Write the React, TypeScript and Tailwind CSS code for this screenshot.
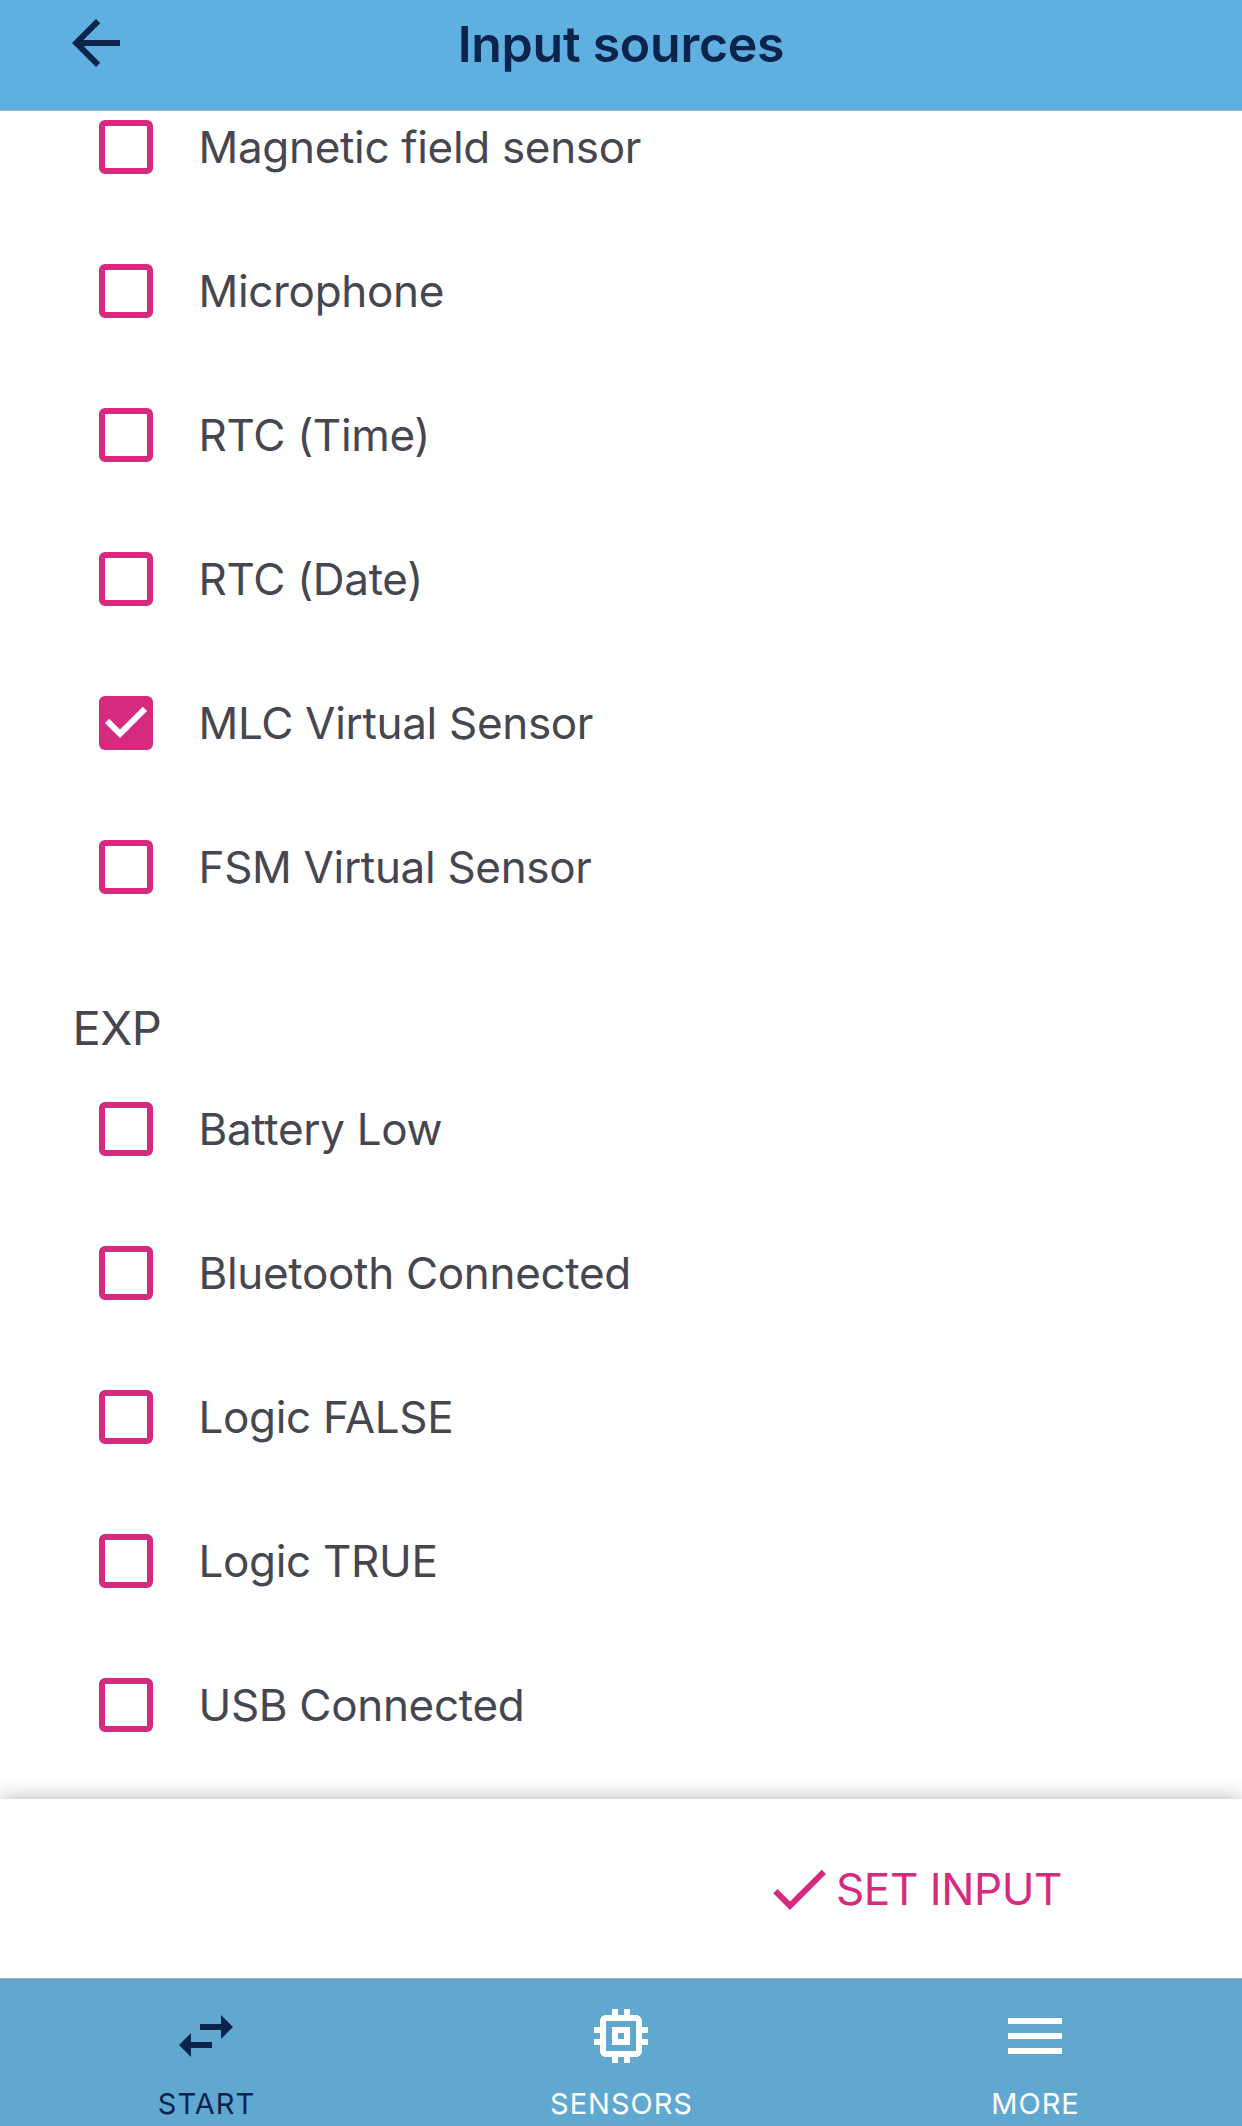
import type { ReactNode } from 'react';

const CORE = ['Magnetic field sensor', 'Microphone', 'RTC (Time)', 'RTC (Date)', 'MLC Virtual Sensor', 'FSM Virtual Sensor'];
const EXP = ['Battery Low', 'Bluetooth Connected', 'Logic FALSE', 'Logic TRUE', 'USB Connected'];
const SELECTED = 'MLC Virtual Sensor';

function Icon({ d }: { d: string }) {
  return (
    <svg viewBox="0 0 24 24" className="size-[72px] shrink-0" fill="currentColor">
      <path d={d} />
    </svg>
  );
}

function Row({ label }: { label: string }) {
  return (
    <li className="flex h-36 items-center pl-[99px]">
      {label === SELECTED ? (
        <span className="flex size-[54px] shrink-0 items-center justify-center rounded-[6px] bg-[#d62a7e] text-white">
          <Icon d="M10 17l-5-5 1.41-1.41L10 14.17l7.59-7.59L19 8z" />
        </span>
      ) : (
        <span className="size-[54px] shrink-0 rounded-[6px] border-6 border-[#d62a7e]" />
      )}
      <span className="ml-[45.5px] text-[44px] leading-[54px] tracking-[-0.32px] whitespace-nowrap">{label}</span>
    </li>
  );
}

function Tab({ label, width, children }: { label: string; width: string; children: ReactNode }) {
  return (
    <div className={`flex flex-col items-center ${width}`}>
      {children}
      <span className="mt-3.5 pl-px text-[29px] leading-9 tracking-[1px]">{label}</span>
    </div>
  );
}

export default function App() {
  return (
    <div className="flex h-[2126px] w-[1242px] flex-col overflow-hidden bg-white font-[Inter,sans-serif] text-[#464650]">
      <header className="flex h-[111px] shrink-0 items-start border-b border-[#a9adb0] bg-[#60afe1] pt-[7px] pl-[60px] text-[#0c234b]">
        <Icon d="M20 11H7.83l5.59-5.59L12 4l-8 8 8 8 1.41-1.41L7.83 13H20z" />
        <h1 className="mt-[7px] mr-[132px] flex-1 text-center text-[50px] leading-[60px] font-semibold tracking-[-0.25px]">Input sources</h1>
      </header>
      <main className="h-[1688px] shrink-0 overflow-hidden">
        <ul className="-mt-9">
          {CORE.map((label) => (
            <Row key={label} label={label} />
          ))}
        </ul>
        <h2 className="mt-[60px] ml-[72.5px] h-[58px] text-[47px] leading-[58px] tracking-[-0.5px]">EXP</h2>
        <ul>
          {EXP.map((label) => (
            <Row key={label} label={label} />
          ))}
        </ul>
      </main>
      <div className="flex h-[179px] shrink-0 items-center pl-[763px] text-[#d62a7e] shadow-[0_0_20px_rgba(0,0,0,0.3)]">
        <Icon d="M9 16.17L4.83 12l-1.42 1.41L9 19 21 7l-1.41-1.41z" />
        <span className="pt-px pl-px text-[44px] leading-[54px] tracking-[-0.4px]">SET INPUT</span>
      </div>
      <nav className="flex h-[148px] shrink-0 border-t border-[#a9adb0] bg-[#61a8d1] pt-[21px] text-white">
        <Tab label="START" width="w-[412px] text-[#0c234b]">
          <Icon d="M6.99 11L3 15l3.99 4v-3H14v-2H6.99zM21 9l-3.99-4v3H10v2h7.01v3z" />
        </Tab>
        <Tab label="SENSORS" width="w-[418px]">
          <Icon d="M15 9H9v6h6V9zm-2 4h-2v-2h2v2zm8-2V9h-2V7c0-1.1-.9-2-2-2h-2V3h-2v2h-2V3H9v2H7c-1.1 0-2 .9-2 2v2H3v2h2v2H3v2h2v2c0 1.1.9 2 2 2h2v2h2v-2h2v2h2v-2h2c1.1 0 2-.9 2-2v-2h2v-2h-2v-2h2zm-4 6H7V7h10v10z" />
        </Tab>
        <Tab label="MORE" width="w-[410px]">
          <Icon d="M3 18h18v-2H3zM3 13h18v-2H3zM3 6v2h18V6z" />
        </Tab>
      </nav>
    </div>
  );
}
